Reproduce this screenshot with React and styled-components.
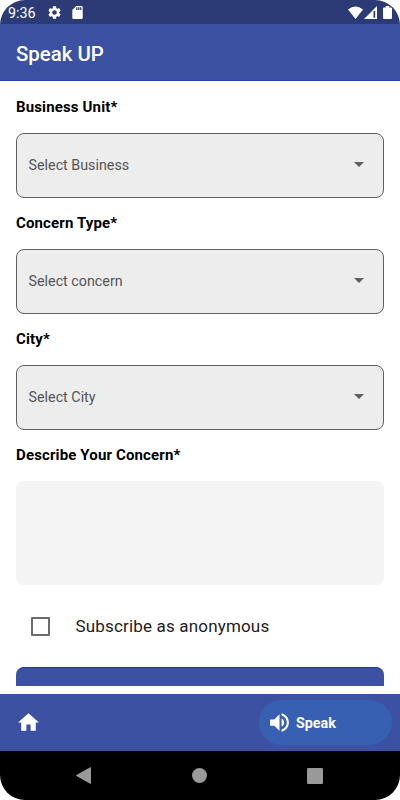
import React from "react";
import styled, { createGlobalStyle } from "styled-components";

const GlobalStyle = createGlobalStyle`
  * { box-sizing: border-box; }
  body { margin: 0; background: #fff; font-family: Roboto, sans-serif; }
`;

const Phone = styled.div`
  width: 400px;
  height: 800px;
  display: flex;
  flex-direction: column;
  overflow: hidden;
  border-radius: 25px;
  background: #fff;
`;

const StatusBar = styled.div`
  flex: none;
  height: 24px;
  display: flex;
  align-items: center;
  padding: 1px 8px 0 8px;
  background: #2c3b75;
  color: #fff;
`;

const Clock = styled.span`
  width: 40px;
  font-size: 14.3px;
  line-height: 20px;
`;

const Glyph = styled.svg`
  display: block;
  flex: none;
  width: ${(p) => p.$w}px;
  height: ${(p) => p.$h || p.$w}px;
  margin-left: ${(p) => p.$gap || 0}px;
  fill: ${(p) => p.$color || "#fff"};
`;

const Spacer = styled.div`
  flex: 1;
`;

const AppBar = styled.header`
  flex: none;
  height: 57px;
  display: flex;
  align-items: center;
  padding: 4px 16px 0;
  background: #3c51a1;
  border-bottom: 1px solid #2545a5;
`;

const Title = styled.h1`
  margin: 0;
  color: #fff;
  font-size: 20.4px;
  font-weight: 500;
  line-height: 28px;
`;

const Form = styled.main`
  flex: none;
  height: 605px;
  padding: 0 16px;
  overflow: hidden;
`;

const Field = styled.div`
  height: ${(p) => p.$h || 116}px;
  padding-top: 16px;
`;

const Label = styled.label`
  display: block;
  height: 20px;
  margin-bottom: 16px;
  color: #000;
  font-size: 15px;
  font-weight: 700;
  letter-spacing: 0.14px;
  line-height: 20px;
`;

const Select = styled.div`
  height: 65px;
  display: flex;
  align-items: center;
  justify-content: space-between;
  padding: 0 19px 2px 11.5px;
  border: 1px solid #606060;
  border-radius: 8px;
  background: #ededed;
  color: #555;
  font-size: 14.3px;
`;

const TextArea = styled.div`
  height: 104px;
  border-radius: 8px;
  background: #f4f4f4;
`;

const CheckRow = styled.div`
  height: 82px;
  display: flex;
  align-items: center;
  padding-left: 15px;
  gap: 25.500px;
  color: #1c1c1c;
  font-size: 17px;
  letter-spacing: 0.17px;
`;

const Checkbox = styled.span`
  width: 19px;
  height: 19px;
  border: 2px solid #6c6c6c;
  border-radius: 1px;
`;

const Submit = styled.div`
  height: 52px;
  border-top: 1px solid #1b3793;
  border-radius: 8px;
  background: #3c51a1;
`;

const BottomBar = styled.nav`
  flex: none;
  height: 57px;
  margin-top: 8px;
  display: flex;
  align-items: center;
  justify-content: space-between;
  padding: 0 8px 0 16px;
  background: #3c51a1;
`;

const Tab = styled.div`
  width: 133px;
  height: 45px;
  display: flex;
  align-items: center;
  padding-left: 8px;
  gap: 4px;
  border-radius: 23px;
  background: #3860b2;
  color: #fff;
  font-size: 14.3px;
  font-weight: 700;
`;

const SystemNav = styled.div`
  flex: none;
  height: 49px;
  display: flex;
  align-items: center;
  justify-content: space-between;
  padding: 0 77px 0 76px;
  background: #000;
`;

const fields = [
  ["Business Unit*", "Select Business"],
  ["Concern Type*", "Select concern"],
  ["City*", "Select City"],
];

export default function App() {
  return (
    <>
      <GlobalStyle />
      <Phone>
        <StatusBar>
          <Clock>9:36</Clock>
          <Glyph viewBox="2 2 20 20" $w={13}>
            <path d="M19.14 12.94c.04-.3.06-.61.06-.94 0-.32-.02-.64-.07-.94l2.03-1.58c.18-.14.23-.41.12-.61l-1.92-3.32c-.12-.22-.37-.29-.59-.22l-2.39.96c-.5-.38-1.03-.7-1.62-.94l-.36-2.54c-.04-.24-.24-.41-.48-.41h-3.84c-.24 0-.43.17-.47.41l-.36 2.54c-.59.24-1.13.57-1.62.94l-2.39-.96c-.22-.08-.47 0-.59.22L2.74 8.87c-.12.21-.08.47.12.61l2.03 1.58c-.05.3-.09.63-.09.94s.02.64.07.94l-2.03 1.58c-.18.14-.23.41-.12.61l1.92 3.32c.12.22.37.29.59.22l2.39-.96c.5.38 1.03.7 1.62.94l.36 2.54c.05.24.24.41.48.41h3.84c.24 0 .44-.17.47-.41l.36-2.54c.59-.24 1.13-.56 1.62-.94l2.39.96c.22.08.47 0 .59-.22l1.92-3.32c.12-.22.07-.47-.12-.61zM12 15.6A3.6 3.6 0 1 1 12 8.4a3.6 3.6 0 0 1 0 7.2z" />
          </Glyph>
          <Glyph viewBox="4 2 16 20" $w={11} $h={13} $gap={10.5}>
            <path d="M18 2h-8L4.020 8 4 20c0 1.100.9 2 2 2h12c1.100 0 2-.9 2-2V4c0-1.100-.9-2-2-2zm-6 6h-2V4h2zm3 0h-2V4h2zm3 0h-2V4h2z" />
          </Glyph>
          <Spacer />
          <Glyph viewBox="0 0 15 13" $w={15} $h={13}>
            <path d="M0 3.500Q7.500-2.300 15 3.500L7.500 13z" />
          </Glyph>
          <Glyph viewBox="0 0 13 13" $w={13} $h={13} $gap={1}>
            <path fillRule="evenodd" d="M13 0v13H0zM9.500 5v6.800h1.700v-6.800z" />
          </Glyph>
          <Glyph viewBox="0 0 9 13" $w={9} $h={13} $gap={6}>
            <path d="M2.700 0h3.600v1.500H8q1 0 1 1V12q0 1-1 1H1q-1 0-1-1V2.500q0-1 1-1h1.700z" />
          </Glyph>
        </StatusBar>
        <AppBar>
          <Title>Speak UP</Title>
        </AppBar>
        <Form>
          {fields.map(([label, hint]) => (
            <Field key={label}>
              <Label>{label}</Label>
              <Select>
                {hint}
                <Glyph viewBox="0 0 10 5" $w={10} $h={5} $color="#5f5f5f">
                  <path d="M0 0h10L5 5z" />
                </Glyph>
              </Select>
            </Field>
          ))}
          <Field $h={156}>
            <Label>Describe Your Concern*</Label>
            <TextArea />
          </Field>
          <CheckRow>
            <Checkbox />
            Subscribe as anonymous
          </CheckRow>
          <Submit />
        </Form>
        <BottomBar>
          <Glyph viewBox="0 0 24 24" $w={25}>
            <path d="M10 20v-6h4v6h5v-8h3L12 3 2 12h3v8z" />
          </Glyph>
          <Tab>
            <Glyph viewBox="0 0 24 24" $w={25}>
              <path d="M3 9v6h4l5 5V4L7 9zm13.500 3A4.500 4.500 0 0 0 14 7.970v8.050c1.480-.73 2.500-2.250 2.500-4.020zM14 3.230v2.060c2.890.86 5 3.540 5 6.710s-2.110 5.850-5 6.710v2.060c4.010-.91 7-4.490 7-8.770s-2.990-7.860-7-8.770z" />
            </Glyph>
            Speak
          </Tab>
        </BottomBar>
        <SystemNav>
          <Glyph viewBox="0 0 15 17" $w={15} $h={17} $color="#999">
            <path d="M14.200.2Q15 0 15 .8v15.400q0 .8-.8.6L.4 9Q-.2 8.500.4 8z" />
          </Glyph>
          <Glyph viewBox="0 0 15 15" $w={15} $color="#999">
            <circle cx="7.500" cy="7.500" r="7.500" />
          </Glyph>
          <Glyph viewBox="0 0 16 16" $w={16} $color="#999">
            <rect width="16" height="16" rx="1.200" />
          </Glyph>
        </SystemNav>
      </Phone>
    </>
  );
}
